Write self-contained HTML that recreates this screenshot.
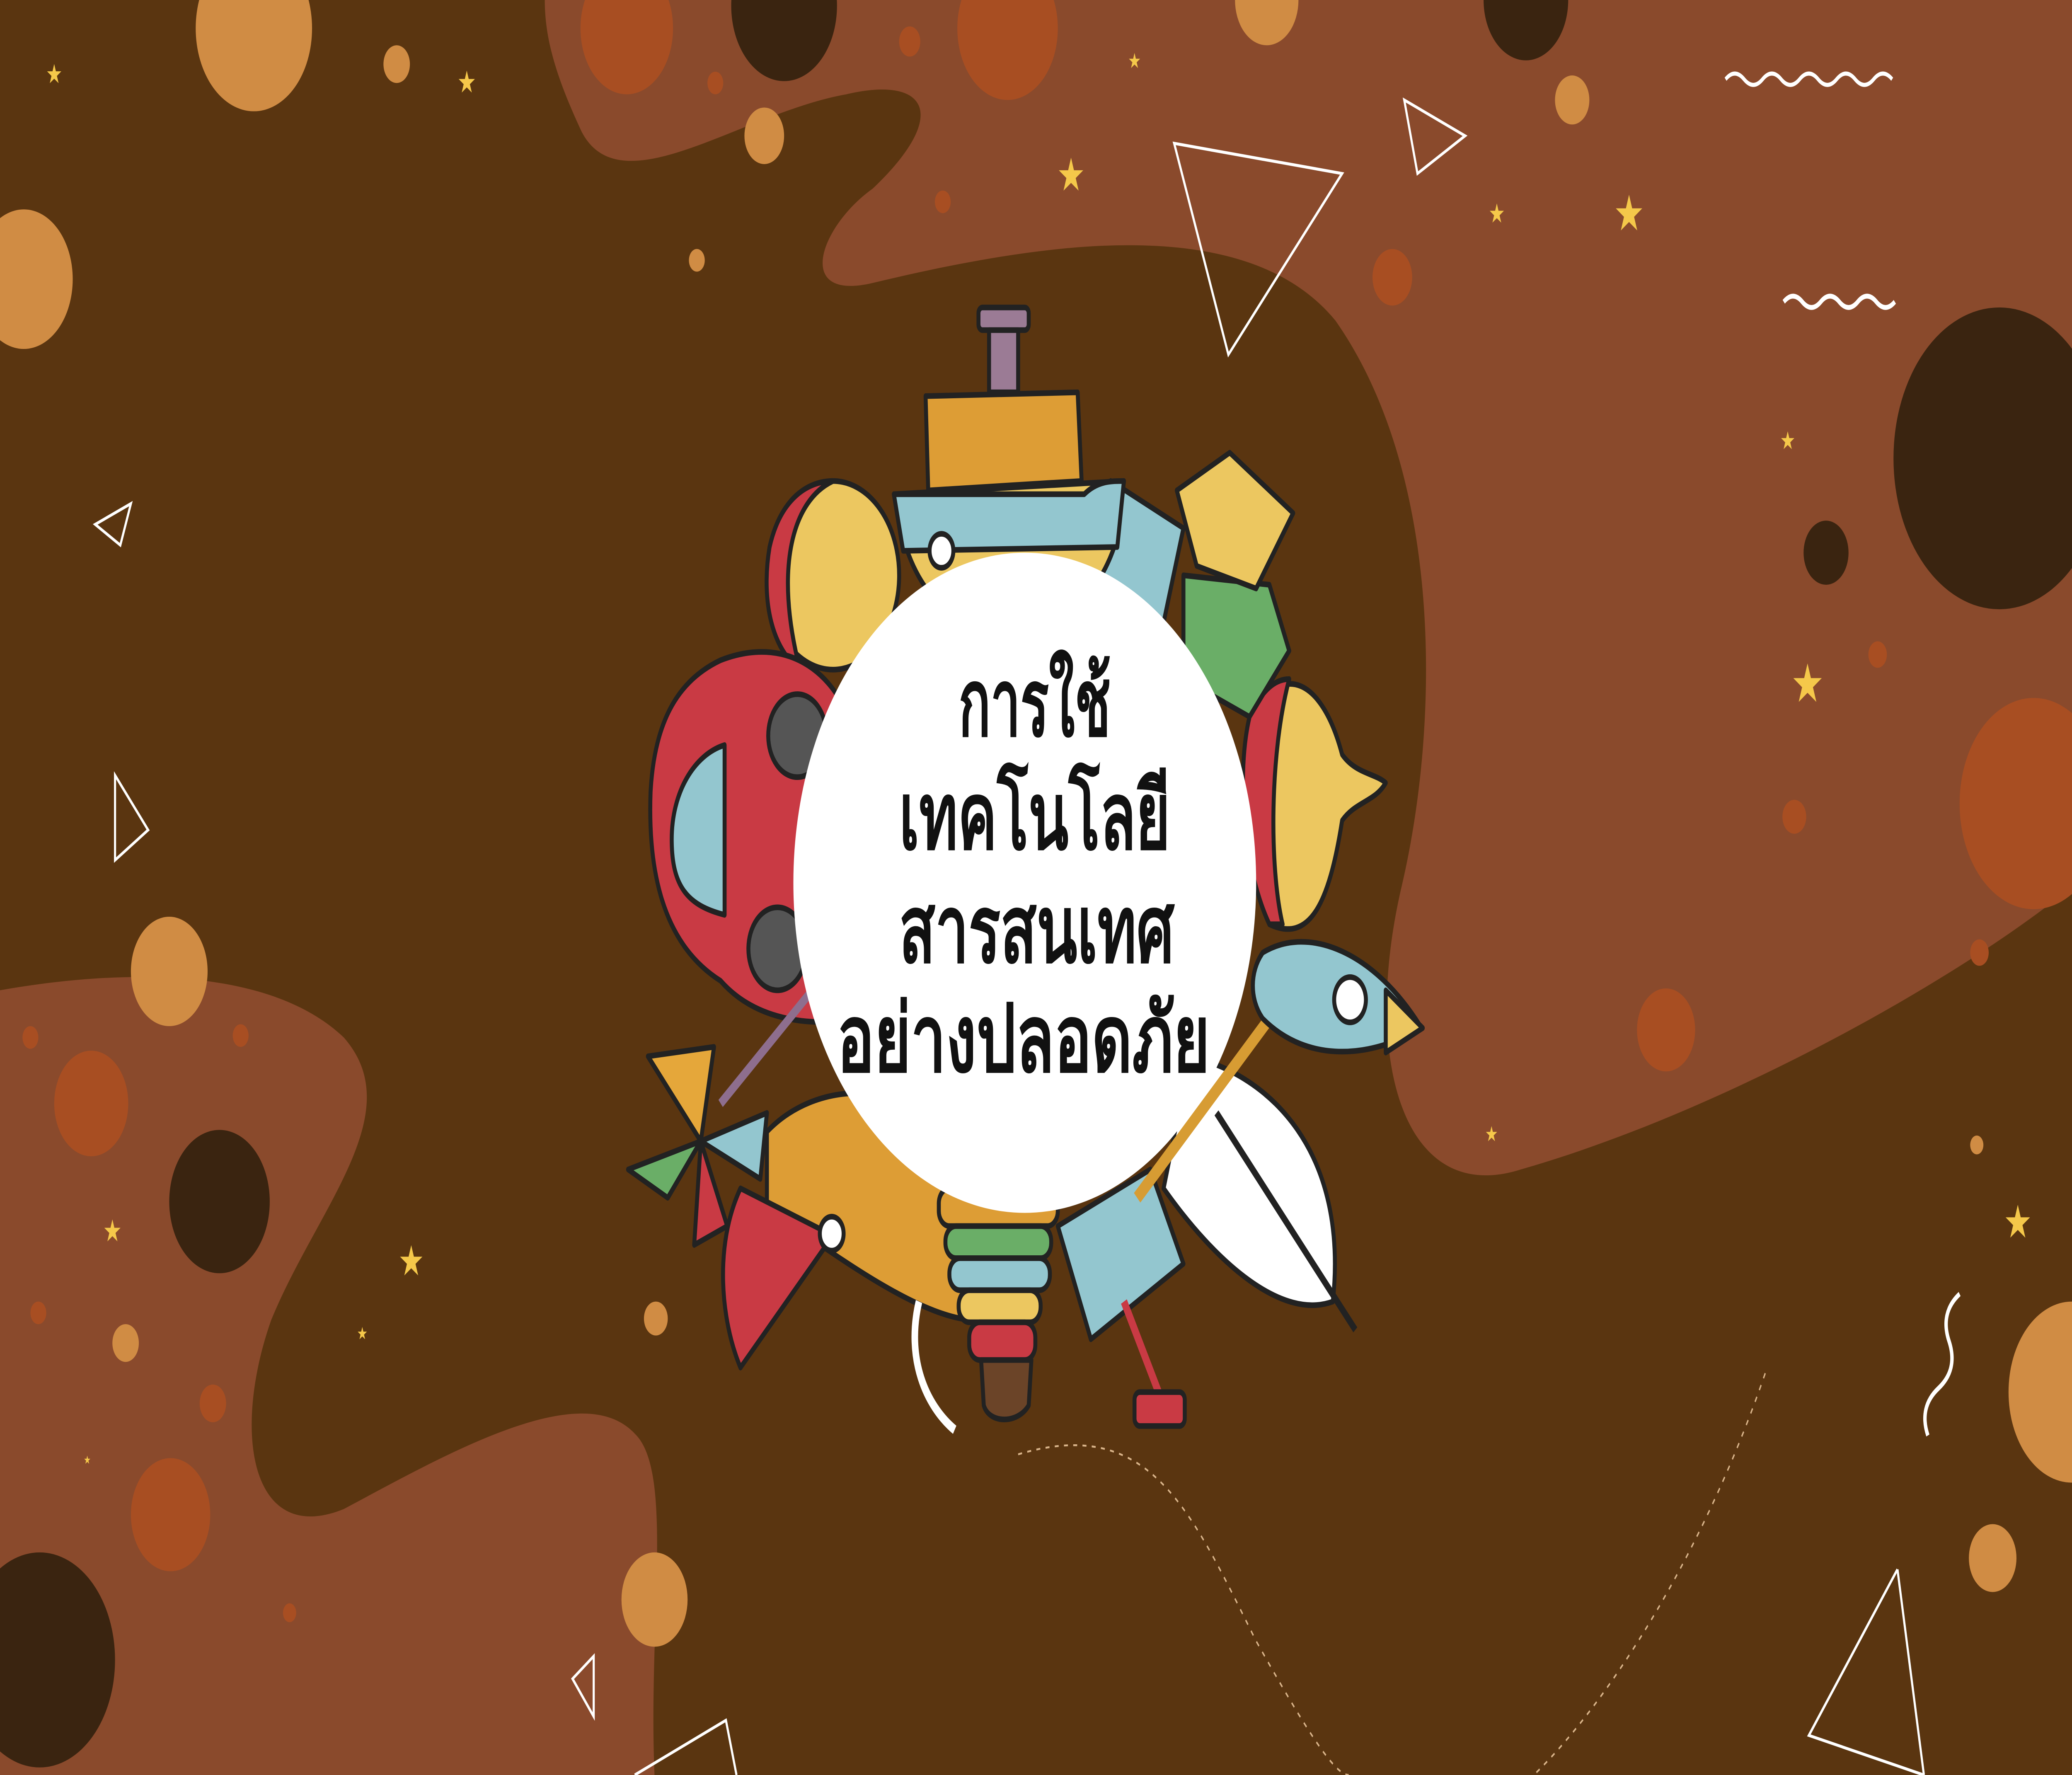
<!DOCTYPE html>
<html><head><meta charset="utf-8"><style>html,body{margin:0;padding:0;overflow:hidden;background:#5a3510;width:100%;height:100%}svg{display:block;position:fixed;left:0;top:0;width:100vw;height:100vh}</style></head>
<body>
<svg viewBox="0 0 1567 941" preserveAspectRatio="none" xmlns="http://www.w3.org/2000/svg">
<rect width="1567" height="941" fill="#5a3510"/>
<path d="M412 0 L1567 0 L1567 470 C1480 520 1300 590 1150 620 C1060 640 1030 560 1060 470 C1090 380 1090 250 1010 170 C940 110 780 130 660 150 C600 160 620 120 660 100 C720 60 700 40 640 50 C560 60 470 110 440 70 C420 40 412 20 412 0 Z" fill="#8a4a2c"/>
<path d="M0 525 C80 515 200 510 260 550 C310 590 240 640 205 700 C175 760 190 820 260 800 C340 770 440 730 480 760 C510 780 490 860 495 941 L0 941 Z" fill="#8a4a2c"/>
<g>
<circle cx="192" cy="15" r="44" fill="#d08c44"/>
<circle cx="18" cy="148" r="37" fill="#d08c44"/>
<circle cx="300" cy="34" r="10" fill="#d08c44"/>
<circle cx="474" cy="15" r="35" fill="#a84e22"/>
<circle cx="593" cy="3" r="40" fill="#3a2410"/>
<circle cx="762" cy="15" r="38" fill="#a84e22"/>
<circle cx="958" cy="0" r="24" fill="#d08c44"/>
<circle cx="1154" cy="0" r="32" fill="#3a2410"/>
<circle cx="578" cy="72" r="15" fill="#d08c44"/>
<circle cx="541" cy="44" r="6" fill="#a84e22"/>
<circle cx="688" cy="22" r="8" fill="#a84e22"/>
<circle cx="527" cy="138" r="6" fill="#d08c44"/>
<circle cx="713" cy="107" r="6" fill="#a84e22"/>
<circle cx="1189" cy="53" r="13" fill="#d08c44"/>
<circle cx="1053" cy="147" r="15" fill="#a84e22"/>
<circle cx="1512" cy="243" r="80" fill="#3a2410"/>
<circle cx="1381" cy="293" r="17" fill="#3a2410"/>
<circle cx="1420" cy="347" r="7" fill="#a84e22"/>
<circle cx="1357" cy="433" r="9" fill="#a84e22"/>
<circle cx="1538" cy="426" r="56" fill="#a84e22"/>
<circle cx="1497" cy="505" r="7" fill="#a84e22"/>
<circle cx="1260" cy="546" r="22" fill="#a84e22"/>
<circle cx="1495" cy="607" r="5" fill="#d08c44"/>
<circle cx="1567" cy="738" r="48" fill="#d08c44"/>
<circle cx="1507" cy="826" r="18" fill="#d08c44"/>
<circle cx="128" cy="515" r="29" fill="#d08c44"/>
<circle cx="23" cy="550" r="6" fill="#a84e22"/>
<circle cx="182" cy="549" r="6" fill="#a84e22"/>
<circle cx="69" cy="585" r="28" fill="#a84e22"/>
<circle cx="166" cy="637" r="38" fill="#3a2410"/>
<circle cx="29" cy="696" r="6" fill="#a84e22"/>
<circle cx="95" cy="712" r="10" fill="#d08c44"/>
<circle cx="161" cy="744" r="10" fill="#a84e22"/>
<circle cx="129" cy="803" r="30" fill="#a84e22"/>
<circle cx="30" cy="880" r="57" fill="#3a2410"/>
<circle cx="219" cy="855" r="5" fill="#a84e22"/>
<circle cx="495" cy="848" r="25" fill="#d08c44"/>
<circle cx="496" cy="699" r="9" fill="#d08c44"/>
</g>
<g fill="#f5c84a" font-family="DejaVu Sans, sans-serif" text-anchor="middle">
<text x="41" y="44" font-size="14">★</text>
<text x="353" y="49" font-size="16">★</text>
<text x="810" y="101" font-size="24">★</text>
<text x="858" y="36" font-size="11">★</text>
<text x="1132" y="118" font-size="14">★</text>
<text x="1232" y="122" font-size="26">★</text>
<text x="1352" y="238" font-size="13">★</text>
<text x="1367" y="372" font-size="28">★</text>
<text x="1128" y="605" font-size="11">★</text>
<text x="1526" y="656" font-size="24">★</text>
<text x="85" y="658" font-size="16">★</text>
<text x="311" y="676" font-size="22">★</text>
<text x="274" y="710" font-size="9">★</text>
<text x="66" y="776" font-size="6">★</text>
</g>
<g fill="none" stroke="#fff" stroke-width="1.6">
<path d="M888 76 L1015 92 L929 188 Z"/>
<path d="M1062 53 L1108 72 L1072 92 Z"/>
<path d="M72 278 L99 267 L91 289 Z"/>
<path d="M87 411 L112 440 L87 456 Z"/>
<path d="M449 878 L449 910 L433 890 Z"/>
<path d="M1435 832 L1368 920 L1455 941"/>
<path d="M1435 832 L1455 941"/>
<path d="M480 941 L549 912 L557 941"/>
<path d="M1305 42 q7 -6 14 0 t14 0 t14 0 t14 0 t14 0 t14 0 t14 0 t14 0 t14 0" stroke-width="2.2"/>
<path d="M1349 160 q7 -6 14 0 t14 0 t14 0 t14 0 t14 0 t14 0" stroke-width="2.6"/>
<path d="M1482 686 q-15 10 -8 25 t-8 25 t-8 25" stroke-width="2.6"/>
<path d="M770 771 C870 750 900 800 950 870 C990 920 1010 941 1020 941" stroke="#d9b48a" stroke-width="1" stroke-dasharray="3 4"/>
<path d="M1335 728 C1290 820 1220 900 1160 941" stroke="#d9b48a" stroke-width="1" stroke-dasharray="3 4"/>
</g>
<g stroke="#222" stroke-width="3" stroke-linejoin="round">
<circle cx="630" cy="305" r="50" fill="#ecc760"/>
<path d="M630 255 C600 265 585 300 605 355 C585 345 575 320 582 290 C590 265 610 255 630 255Z" fill="#c93a44"/>
<path d="M545 350 C600 335 640 360 650 400 L650 540 C610 545 570 540 545 520 C500 500 490 460 492 420 C495 380 515 360 545 350Z" fill="#c93a44"/>
<path d="M548 395 C525 400 508 420 508 445 C508 470 520 480 548 485 Z" fill="#93c6cf"/>
<circle cx="603" cy="390" r="22" fill="#555"/>
<circle cx="588" cy="503" r="22" fill="#555"/>
<path d="M530 605 L490 560 L540 555 Z" fill="#e5a73a"/>
<path d="M530 605 L580 590 L575 625 Z" fill="#93c6cf"/>
<path d="M530 605 L475 620 L505 635 Z" fill="#6aae67"/>
<path d="M530 605 L525 660 L550 650 Z" fill="#c93a44"/>
<path d="M545 585 L620 520" stroke="#8e6e8e" stroke-width="5"/>
<path d="M580 600 C620 570 700 570 740 620 L740 700 C700 700 640 670 580 640Z" fill="#dd9d35"/>
<path d="M560 630 L630 655 L560 725 C545 700 540 660 560 630Z" fill="#c93a44"/>
<circle cx="629" cy="654" r="9" fill="#fff"/>
<path d="M695 690 C685 720 700 745 722 758" stroke="#fff" stroke-width="5" fill="none"/>
<rect x="710" y="630" width="90" height="20" rx="8" fill="#dd9d35"/>
<rect x="715" y="650" width="80" height="17" rx="8" fill="#6aae67"/>
<rect x="718" y="667" width="76" height="17" rx="8" fill="#93c6cf"/>
<rect x="725" y="684" width="62" height="17" rx="8" fill="#ecc760"/>
<rect x="733" y="701" width="50" height="20" rx="8" fill="#c93a44"/>
<path d="M742 721 L780 721 L778 745 C770 755 748 755 744 745Z" fill="#6b4428"/>
<path d="M800 650 L870 620 L895 670 L825 710Z" fill="#93c6cf"/>
<path d="M850 690 L880 745" stroke="#c93a44" stroke-width="5"/>
<rect x="858" y="738" width="38" height="18" rx="4" fill="#c93a44"/>
<path d="M900 560 C960 570 1020 610 1008 690 C970 700 920 670 880 630Z" fill="#fff"/>
<path d="M920 590 L1025 705" stroke-width="4"/>
<path d="M860 635 L960 540" stroke="#d79c33" stroke-width="7"/>
<path d="M955 505 C990 490 1040 505 1075 545 C1040 560 990 565 955 540 C945 530 945 515 955 505Z" fill="#93c6cf"/>
<path d="M1048 525 L1076 545 L1048 558Z" fill="#ecc760"/>
<circle cx="1021" cy="530" r="12" fill="#fff"/>
<path d="M945 380 C970 350 1000 360 1015 400 C1025 410 1040 410 1048 415 C1040 425 1025 425 1015 435 C1005 480 990 500 960 490 C940 460 935 410 945 380Z" fill="#ecc760"/>
<path d="M945 380 C955 365 965 360 975 360 C960 400 960 460 970 490 L960 490 C940 460 935 410 945 380Z" fill="#c93a44"/>
<path d="M840 255 L895 280 L880 330 L830 305Z" fill="#93c6cf"/>
<path d="M895 305 L960 310 L975 345 L945 380 L895 360Z" fill="#6aae67"/>
<path d="M890 260 L930 240 L978 272 L950 312 L905 300Z" fill="#ecc760"/>
<rect x="740" y="163" width="38" height="12" rx="3" fill="#9b7b95"/>
<rect x="748" y="175" width="22" height="33" fill="#9b7b95"/>
<path d="M700 210 L815 208 L818 255 L702 260Z" fill="#dd9d35"/>
<path d="M676 262 L850 255 L845 285 C830 320 800 333 760 333 C720 333 695 315 683 285Z" fill="#ecc760"/>
<path d="M676 262 L820 262 C830 255 840 255 850 255 L845 290 L683 292Z" fill="#93c6cf"/>
<circle cx="712" cy="292" r="9" fill="#fff"/>
</g>
<circle cx="775" cy="468" r="175" fill="#fff"/>
<g font-family="'Liberation Sans','Noto Sans CJK SC',sans-serif" font-size="50" font-weight="bold" fill="#111">
<text x="725" y="390" textLength="115" lengthAdjust="spacingAndGlyphs">การใช้</text>
<text x="680" y="450" textLength="205" lengthAdjust="spacingAndGlyphs">เทคโนโลยี</text>
<text x="680" y="510" textLength="208" lengthAdjust="spacingAndGlyphs">สารสนเทศ</text>
<text x="633" y="568" textLength="282" lengthAdjust="spacingAndGlyphs">อย่างปลอดภัย</text>
</g>
</svg>
</body></html>
